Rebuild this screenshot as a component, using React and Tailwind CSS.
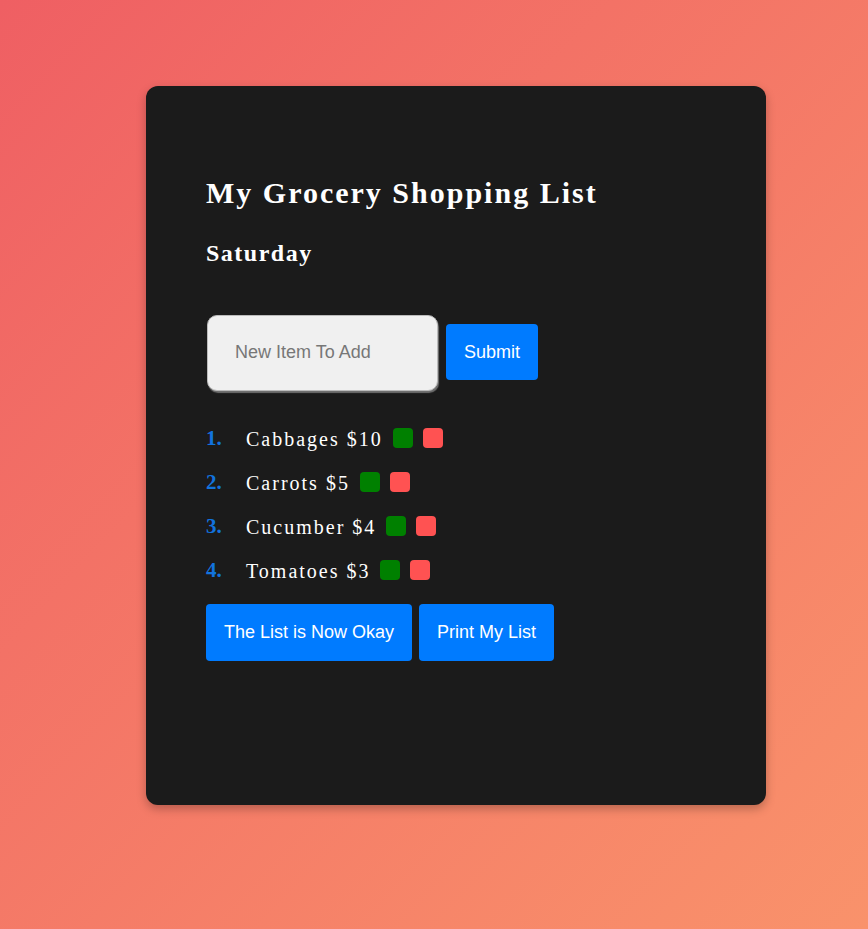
const items = [
  { name: 'Cabbages', price: 10 },
  { name: 'Carrots', price: 5 },
  { name: 'Cucumber', price: 4 },
  { name: 'Tomatoes', price: 3 },
];

const serif = "font-['Liberation_Serif','Times_New_Roman',serif]";
const sans = "font-['Liberation_Sans',Arial,sans-serif]";

export default function App() {
  return (
    <div className="min-h-[929px] w-full bg-gradient-to-br from-[#ef5f63] to-[#f9926b] pt-[86px] pb-[124px]">
      <div className="ml-[146px] flex h-[719px] w-[620px] flex-col rounded-xl bg-[#1b1b1b] px-[60px] pt-[89px] shadow-[0_4px_10px_rgba(0,0,0,0.25)]">
        <h1 className={`${serif} text-[30px] leading-[36px] font-bold tracking-[2px] text-white`}>
          My Grocery Shopping List
        </h1>
        <h2 className={`${serif} mt-[28px] text-[24px] leading-[28px] font-bold tracking-[1.5px] text-white`}>
          Saturday
        </h2>

        <form className="mt-[48px] flex items-start gap-2" onSubmit={(e) => e.preventDefault()}>
          <input
            type="text"
            placeholder="New Item To Add"
            className={`${sans} ml-px h-[76px] w-[231px] rounded-[10px] border border-[#bbb] bg-[#f0f0f0] px-[27px] pb-[2px] text-[18px] text-black shadow-[1px_2px_1px_#6f6f6f] outline-none placeholder:text-[#777]`}
          />
          <button
            type="submit"
            className={`${sans} mt-[9px] h-[56px] w-[92px] rounded-[4px] bg-[#007bff] text-[18px] text-white`}
          >
            Submit
          </button>
        </form>

        <ol className="mt-[36px] flex flex-col gap-[21px]">
          {items.map((item, i) => (
            <li key={item.name} className="flex h-[23px] items-center">
              <span className={`${serif} w-[40px] text-[21px] font-bold text-[#1273de]`}>{i + 1}.</span>
              <span className={`${serif} text-[20px] tracking-[2px] text-white`}>
                {item.name} ${item.price}
              </span>
              <button className="mb-[2px] ml-[10px] h-5 w-5 rounded-[4px] bg-[#008000]" aria-label="Done" />
              <button className="mb-[2px] ml-[10px] h-5 w-5 rounded-[4px] bg-[#ff5252]" aria-label="Remove" />
            </li>
          ))}
        </ol>

        <div className="mt-[22px] flex gap-[7px]">
          <button className={`${sans} h-[57px] rounded-[4px] bg-[#007bff] px-[18px] text-[18px] text-white`}>
            The List is Now Okay
          </button>
          <button className={`${sans} h-[57px] rounded-[4px] bg-[#007bff] px-[18px] text-[18px] text-white`}>
            Print My List
          </button>
        </div>
      </div>
    </div>
  );
}
